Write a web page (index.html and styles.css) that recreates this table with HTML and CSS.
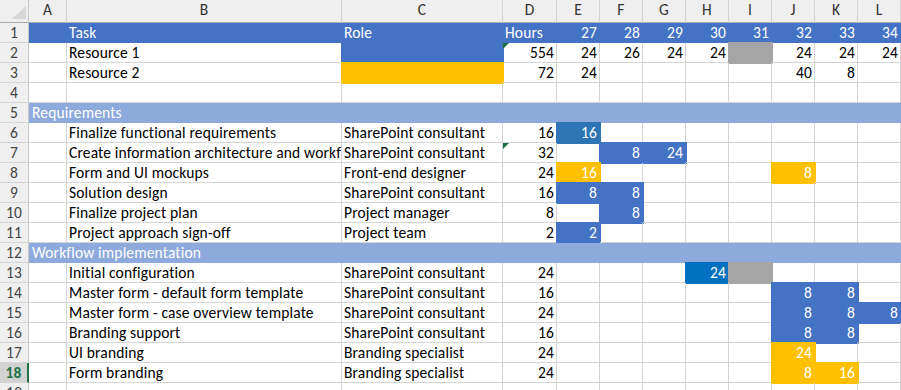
FILE: index.html
```html
<!DOCTYPE html>
<html lang="en">
<head>
<meta charset="utf-8">
<title>Resource plan</title>
<link rel="stylesheet" href="styles.css">
</head>
<body>
<div class="sheet">
  <div class="row head">
    <div class="corner"><svg class="tri" width="28" height="22" viewBox="0 0 28 22"><polygon points="12,19 26,19 26,6" fill="#d6d6d6"/></svg></div>
    <div class="ch">A</div><div class="ch">B</div><div class="ch">C</div><div class="ch">D</div><div class="ch">E</div><div class="ch">F</div><div class="ch">G</div><div class="ch">H</div><div class="ch">I</div><div class="ch">J</div><div class="ch">K</div><div class="ch">L</div>
  </div>

  <div class="row">
    <div class="rh">1</div>
    <div class="c hb"></div><div class="c hb">Task</div><div class="c hb">Role</div><div class="c hb">Hours</div>
    <div class="c hb n">27</div><div class="c hb n">28</div><div class="c hb n">29</div><div class="c hb n">30</div><div class="c hb n">31</div><div class="c hb n">32</div><div class="c hb n">33</div><div class="c hb n">34</div>
  </div>

  <div class="row">
    <div class="rh">2</div>
    <div class="c"></div><div class="c">Resource 1</div><div class="c blue"></div><div class="c n err">554</div>
    <div class="c n">24</div><div class="c n">26</div><div class="c n">24</div><div class="c n">24</div><div class="c grey"></div><div class="c n">24</div><div class="c n">24</div><div class="c n">24</div>
  </div>

  <div class="row">
    <div class="rh">3</div>
    <div class="c"></div><div class="c">Resource 2</div><div class="c orange"></div><div class="c n">72</div>
    <div class="c n">24</div><div class="c"></div><div class="c"></div><div class="c"></div><div class="c"></div><div class="c n">40</div><div class="c n">8</div><div class="c"></div>
  </div>

  <div class="row">
    <div class="rh">4</div>
    <div class="c"></div><div class="c"></div><div class="c"></div><div class="c"></div>
    <div class="c"></div><div class="c"></div><div class="c"></div><div class="c"></div><div class="c"></div><div class="c"></div><div class="c"></div><div class="c"></div>
  </div>

  <div class="row">
    <div class="rh">5</div>
    <div class="c section">Requirements</div>
  </div>

  <div class="row">
    <div class="rh">6</div>
    <div class="c"></div><div class="c">Finalize functional requirements</div><div class="c">SharePoint consultant</div><div class="c n">16</div>
    <div class="c n dblue">16</div><div class="c"></div><div class="c"></div><div class="c"></div><div class="c"></div><div class="c"></div><div class="c"></div><div class="c"></div>
  </div>

  <div class="row">
    <div class="rh">7</div>
    <div class="c"></div><div class="c">Create information architecture and workflows</div><div class="c">SharePoint consultant</div><div class="c n err">32</div>
    <div class="c"></div><div class="c n blue">8</div><div class="c n blue">24</div><div class="c"></div><div class="c"></div><div class="c"></div><div class="c"></div><div class="c"></div>
  </div>

  <div class="row">
    <div class="rh">8</div>
    <div class="c"></div><div class="c">Form and UI mockups</div><div class="c">Front-end designer</div><div class="c n">24</div>
    <div class="c n orange">16</div><div class="c"></div><div class="c"></div><div class="c"></div><div class="c"></div><div class="c n orange">8</div><div class="c"></div><div class="c"></div>
  </div>

  <div class="row">
    <div class="rh">9</div>
    <div class="c"></div><div class="c">Solution design</div><div class="c">SharePoint consultant</div><div class="c n">16</div>
    <div class="c n blue">8</div><div class="c n blue">8</div><div class="c"></div><div class="c"></div><div class="c"></div><div class="c"></div><div class="c"></div><div class="c"></div>
  </div>

  <div class="row">
    <div class="rh">10</div>
    <div class="c"></div><div class="c">Finalize project plan</div><div class="c">Project manager</div><div class="c n">8</div>
    <div class="c"></div><div class="c n blue">8</div><div class="c"></div><div class="c"></div><div class="c"></div><div class="c"></div><div class="c"></div><div class="c"></div>
  </div>

  <div class="row">
    <div class="rh">11</div>
    <div class="c"></div><div class="c">Project approach sign-off</div><div class="c">Project team</div><div class="c n">2</div>
    <div class="c n blue">2</div><div class="c"></div><div class="c"></div><div class="c"></div><div class="c"></div><div class="c"></div><div class="c"></div><div class="c"></div>
  </div>

  <div class="row">
    <div class="rh">12</div>
    <div class="c section">Workflow implementation</div>
  </div>

  <div class="row">
    <div class="rh">13</div>
    <div class="c"></div><div class="c">Initial configuration</div><div class="c">SharePoint consultant</div><div class="c n">24</div>
    <div class="c"></div><div class="c"></div><div class="c"></div><div class="c n sblue">24</div><div class="c grey"></div><div class="c"></div><div class="c"></div><div class="c"></div>
  </div>

  <div class="row">
    <div class="rh">14</div>
    <div class="c"></div><div class="c">Master form - default form template</div><div class="c">SharePoint consultant</div><div class="c n">16</div>
    <div class="c"></div><div class="c"></div><div class="c"></div><div class="c"></div><div class="c"></div><div class="c n blue">8</div><div class="c n blue">8</div><div class="c"></div>
  </div>

  <div class="row">
    <div class="rh">15</div>
    <div class="c"></div><div class="c">Master form - case overview template</div><div class="c">SharePoint consultant</div><div class="c n">24</div>
    <div class="c"></div><div class="c"></div><div class="c"></div><div class="c"></div><div class="c"></div><div class="c n blue">8</div><div class="c n blue">8</div><div class="c n blue">8</div>
  </div>

  <div class="row">
    <div class="rh">16</div>
    <div class="c"></div><div class="c">Branding support</div><div class="c">SharePoint consultant</div><div class="c n">16</div>
    <div class="c"></div><div class="c"></div><div class="c"></div><div class="c"></div><div class="c"></div><div class="c n blue">8</div><div class="c n blue">8</div><div class="c"></div>
  </div>

  <div class="row">
    <div class="rh">17</div>
    <div class="c"></div><div class="c">UI branding</div><div class="c">Branding specialist</div><div class="c n">24</div>
    <div class="c"></div><div class="c"></div><div class="c"></div><div class="c"></div><div class="c"></div><div class="c n orange">24</div><div class="c"></div><div class="c"></div>
  </div>

  <div class="row">
    <div class="rh sel">18</div>
    <div class="c"></div><div class="c">Form branding</div><div class="c">Branding specialist</div><div class="c n">24</div>
    <div class="c"></div><div class="c"></div><div class="c"></div><div class="c"></div><div class="c"></div><div class="c n orange">8</div><div class="c n orange">16</div><div class="c"></div>
  </div>

  <div class="row">
    <div class="rh">19</div>
    <div class="c"></div><div class="c"></div><div class="c"></div><div class="c"></div>
    <div class="c"></div><div class="c"></div><div class="c"></div><div class="c"></div><div class="c"></div><div class="c"></div><div class="c"></div><div class="c"></div>
  </div>
</div>
</body>
</html>
```

FILE: styles.css
```css
* { box-sizing: border-box; }
html, body { margin: 0; padding: 0; background: #ffffff; }
body {
  width: 901px;
  height: 390px;
  overflow: hidden;
  font-family: Calibri, Carlito, Lato, "Liberation Sans", sans-serif;
  font-size: 15.5px;
  letter-spacing: 0.15px;
  color: #000000;
}
.sheet { display: flex; flex-direction: column; }
.row {
  display: grid;
  grid-template-columns: 29px 38px 275px 161px 54px repeat(8, 43px);
  height: 20px;
  flex: none;
}
.row.head { height: 23px; }

.corner {
  background: #efefef;
  border-right: 1px solid #c8c8c8;
  border-bottom: 1px solid #ababab;
}
.tri { display: block; }
.ch {
  background: #efefef;
  border-right: 1px solid #d4d4d4;
  border-bottom: 1px solid #ababab;
  text-align: center;
  line-height: 20px;
  color: #333333;
}
.rh {
  background: #efefef;
  border-right: 1px solid #c8c8c8;
  border-bottom: 1px solid #d4d4d4;
  text-align: center;
  line-height: 19px;
  color: #444444;
}
.rh.sel {
  background: #d2d2d2;
  color: #217346;
  font-weight: bold;
  border-right: 2px solid #217346;
}

.c {
  border-right: 1px solid #d4d4d4;
  border-bottom: 1px solid #d4d4d4;
  white-space: nowrap;
  overflow: hidden;
  padding: 0 2px;
  line-height: 19px;
  position: relative;
}
.n { text-align: right; }

.hb { background: #4472c4; border-color: #4472c4; color: #ffffff; }
.section {
  grid-column: 2 / -1;
  background: #8ea9db;
  border-color: #8ea9db;
  color: #ffffff;
  padding-left: 3px;
}

.blue { --f: #4472c4; }
.dblue { --f: #2e75b6; }
.sblue { --f: #0070c0; }
.orange { --f: #ffc000; }
.grey { --f: #a5a5a5; }
.blue, .dblue, .sblue, .orange, .grey {
  background: var(--f);
  border-color: var(--f);
  box-shadow: 0 0 0 1px var(--f);
  color: #ffffff;
  overflow: visible;
}

.err::before {
  content: "";
  position: absolute;
  left: 0;
  top: 0;
  border-top: 6px solid #1e7145;
  border-right: 6px solid transparent;
}
```
